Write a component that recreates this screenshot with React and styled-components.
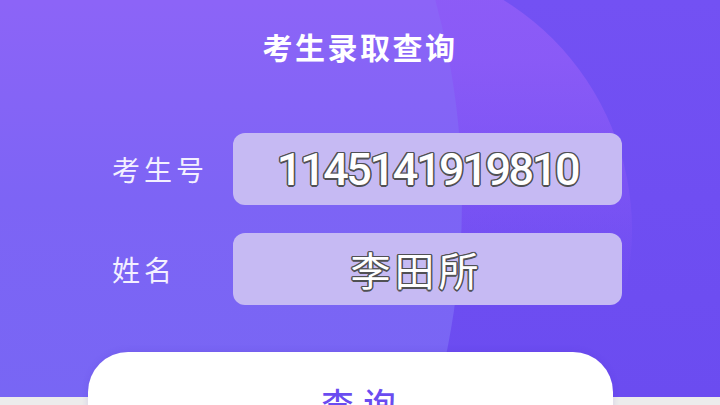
import React from "react";
import styled, { createGlobalStyle } from "styled-components";

const GlobalStyle = createGlobalStyle`
  html, body {
    margin: 0;
    padding: 0;
    background: #ececec;
  }
  body {
    font-family: "Noto Sans CJK SC", "Noto Sans", sans-serif;
  }
  * { box-sizing: border-box; }
`;

const Page = styled.div`
  width: 720px;
  height: 405px;
  overflow: hidden;
  background: #ececec;
`;

const Panel = styled.section`
  position: relative;
  height: 397px;
  background: linear-gradient(180deg, #7351f3 0%, #6f4ef2 50%, #6b4cf0 100%);
`;

const Backdrop = styled.div`
  position: absolute;
  inset: 0;
  overflow: hidden;
  z-index: 0;
`;

const Circle = styled.div`
  position: absolute;
  border-radius: 50%;
  left: ${(p) => p.$x - p.$r}px;
  top: ${(p) => p.$y - p.$r}px;
  width: ${(p) => p.$r * 2}px;
  height: ${(p) => p.$r * 2}px;
  background: ${(p) => p.$fill};
`;

const Content = styled.div`
  position: relative;
  z-index: 1;
  display: flex;
  flex-direction: column;
  padding-top: 28px;
`;

const Title = styled.h1`
  margin: 0;
  height: 36px;
  line-height: 36px;
  text-align: center;
  font-size: 30px;
  font-weight: 700;
  letter-spacing: 2.5px;
  color: #ffffff;
`;

const Form = styled.div`
  display: flex;
  flex-direction: column;
  gap: 28px;
  margin-top: 69px;
  padding-left: 112px;
`;

const Row = styled.div`
  display: flex;
  align-items: center;
`;

const Label = styled.span`
  width: 121px;
  font-size: 28px;
  line-height: 1;
  letter-spacing: 4px;
  color: #f3f0ff;
`;

const Field = styled.div`
  width: 389px;
  height: 72px;
  border-radius: 12px;
  background: #c6baf3;
  display: flex;
  align-items: center;
  justify-content: center;
  padding-right: ${(p) => p.$padRight || 0}px;
`;

const outline = "#505054";

const Value = styled.span`
  font-family: ${(p) =>
    p.$digits
      ? `Roboto, "Noto Sans", sans-serif`
      : `"Noto Sans CJK SC", sans-serif`};
  font-size: ${(p) => (p.$digits ? 45 : 40)}px;
  font-weight: ${(p) => (p.$digits ? 500 : 400)};
  letter-spacing: ${(p) => (p.$digits ? -2.4 : 4)}px;
  line-height: 1;
  color: #ffffff;
  text-shadow:
    -1.1px -1.1px 0 ${outline},
    1.1px -1.1px 0 ${outline},
    -1.1px 1.1px 0 ${outline},
    1.1px 1.1px 0 ${outline},
    0 -1.5px 0 ${outline},
    0 1.5px 0 ${outline},
    -1.5px 0 0 ${outline},
    1.5px 0 0 ${outline};
`;

const QueryButton = styled.button`
  margin-top: 47px;
  margin-left: 88px;
  width: 525px;
  height: 100px;
  border: none;
  border-radius: 40px;
  background: #ffffff;
  display: flex;
  align-items: center;
  justify-content: center;
  padding: 0 0 0 26px;
  font-family: "Noto Sans CJK SC", sans-serif;
  font-size: 32px;
  font-weight: 500;
  letter-spacing: 10px;
  color: #6a4cf0;
  box-shadow: 0 -1px 6px rgba(80, 50, 200, 0.15);
`;

export default function App() {
  return (
    <>
      <GlobalStyle />
      <Page>
        <Panel>
          <Backdrop>
            <Circle
              $x={362}
              $y={230}
              $r={270}
              $fill="linear-gradient(180deg, rgba(142,92,247,1) 0%, rgba(142,92,247,0.85) 18%, rgba(142,92,247,0.4) 40%, rgba(142,92,247,0) 62%)"
            />
            <Circle
              $x={-300}
              $y={200}
              $r={762}
              $fill="linear-gradient(180deg, #8c64f7 37%, #7d64f5 50%, #7866f4 63%)"
            />
          </Backdrop>
          <Content>
            <Title>考生录取查询</Title>
            <Form>
              <Row>
                <Label>考生号</Label>
                <Field>
                  <Value $digits>1145141919810</Value>
                </Field>
              </Row>
              <Row>
                <Label>姓名</Label>
                <Field $padRight={22}>
                  <Value>李田所</Value>
                </Field>
              </Row>
            </Form>
            <QueryButton>查询</QueryButton>
          </Content>
        </Panel>
      </Page>
    </>
  );
}
